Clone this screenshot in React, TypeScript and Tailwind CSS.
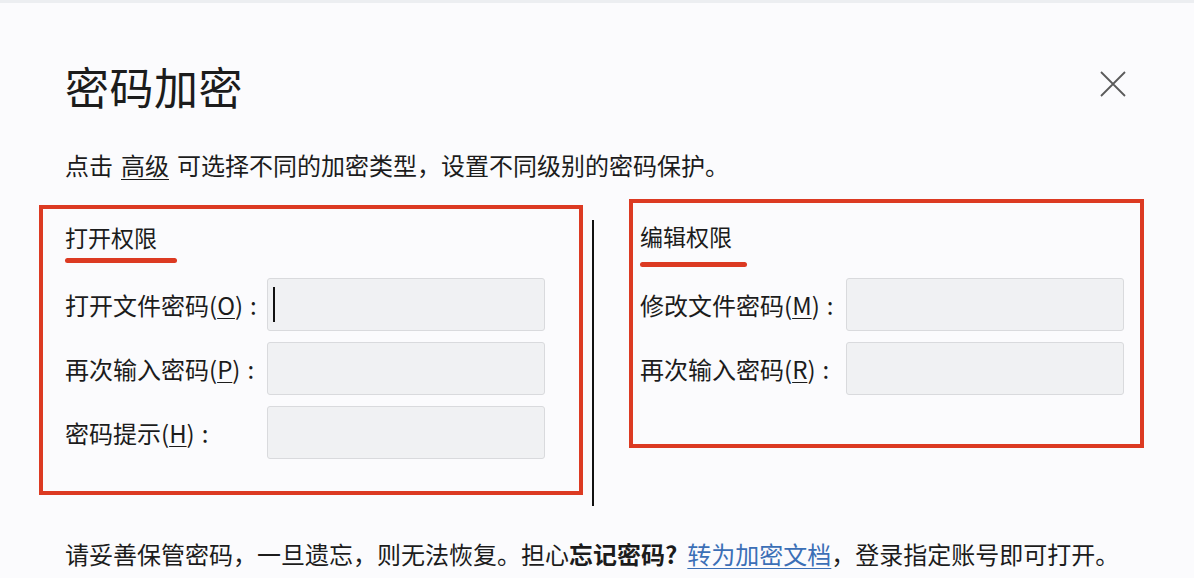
import React from "react";

const FONT = "font-['Noto_Sans_CJK_SC','Microsoft_YaHei',sans-serif]";

interface FieldProps {
  label: string;
  hotkey: string;
  labelWidth: string;
  caret?: boolean;
}

const Field: React.FC<FieldProps> = ({ label, hotkey, labelWidth, caret = false }) => (
  <div className="flex items-center">
    <div className={`${labelWidth} shrink-0 whitespace-nowrap text-[24px] leading-none text-[#1c1c1c]`}>
      {label}(<span className="underline underline-offset-[3px] decoration-1">{hotkey}</span>)
      <span className="ml-[7px]">:</span>
    </div>
    <div className="flex h-[53px] w-[278px] items-center rounded-[3px] border border-[#d9dadd] bg-[#f0f1f3]">
      {caret && <div className="ml-[5px] h-[35px] w-[2px] bg-[#111]" />}
    </div>
  </div>
);

const SectionTitle: React.FC<{ title: string; barWidth: string; barGap: string }> = ({ title, barWidth, barGap }) => (
  <div>
    <div className="text-[23px] leading-none text-[#1c1c1c]">{title}</div>
    <div className={`${barGap} ${barWidth} h-[5px] rounded-full bg-[#dc3a22]`} />
  </div>
);

const App: React.FC = () => {
  return (
    <div className={`${FONT} h-[578px] w-[1194px] overflow-hidden border-t-[3px] border-[#eceef1] bg-[#fbfbfd] text-[#1c1c1c]`}>
      {/* Header */}
      <div className="flex items-center justify-between pl-[65px] pr-[68px] pt-[61px]">
        <h1 className="text-[44px] font-normal leading-none tracking-[0.5px]">密码加密</h1>
        <svg width="26" height="26" viewBox="0 0 26 26" className="-mt-[4px]">
          <path d="M1 1 L25 25 M25 1 L1 25" stroke="#5a5a5a" strokeWidth="1.8" fill="none" />
        </svg>
      </div>

      {/* Hint */}
      <p className="mt-[45px] pl-[65px] text-[24px] leading-none">
        点击<span className="mx-[8px] underline underline-offset-[4px] decoration-1">高级</span>可选择不同的加密类型，设置不同级别的密码保护。
      </p>

      {/* Permission panels */}
      <div className="mt-[22px] flex items-start">
        <div className="ml-[39px] mt-[6px] h-[290px] w-[544px] border-[4px] border-[#dc3a22] pl-[22px] pt-[17px]">
          <SectionTitle title="打开权限" barWidth="w-[112px]" barGap="mt-[9px]" />
          <div className="mt-[15px] flex flex-col gap-[11px]">
            <Field label="打开文件密码" hotkey="O" labelWidth="w-[202px]" caret />
            <Field label="再次输入密码" hotkey="P" labelWidth="w-[202px]" />
            <Field label="密码提示" hotkey="H" labelWidth="w-[202px]" />
          </div>
        </div>

        <div className="ml-[9px] mt-[21px] h-[286px] w-[2px] bg-[#111]" />

        <div className="ml-[35px] h-[249px] w-[515px] border-[4px] border-[#dc3a22] pl-[7px] pt-[22px]">
          <SectionTitle title="编辑权限" barWidth="w-[107px]" barGap="mt-[14px]" />
          <div className="mt-[11px] flex flex-col gap-[11px]">
            <Field label="修改文件密码" hotkey="M" labelWidth="w-[206px]" />
            <Field label="再次输入密码" hotkey="R" labelWidth="w-[206px]" />
          </div>
        </div>
      </div>

      {/* Footer */}
      <p className="mt-[36px] pl-[65px] text-[24px] leading-none">
        请妥善保管密码，一旦遗忘，则无法恢复。担心<span className="font-bold">忘记密码?</span>
        <span className="ml-[10px] text-[#3b6fb6] underline underline-offset-[4px] decoration-1">转为加密文档</span>，登录指定账号即可打开。
      </p>
    </div>
  );
};

export default App;
